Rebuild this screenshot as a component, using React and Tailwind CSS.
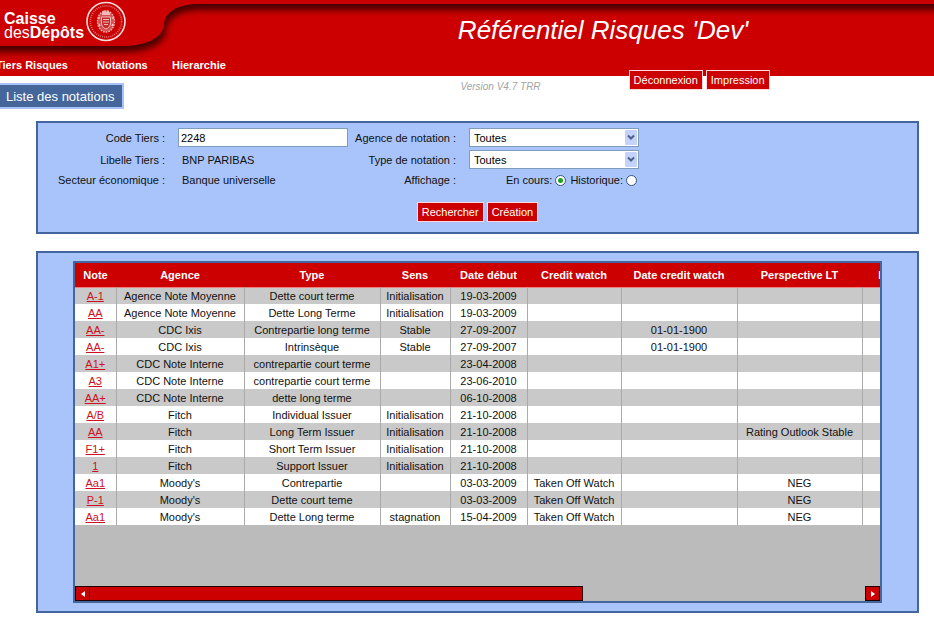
import React from "react";

const NAV = [
  ["Tiers Risques", "w-[77px]"],
  ["Notations", "w-[51px]"],
  ["Hierarchie", "w-[60px]"],
];

const COLUMNS = [
  ["Note", "w-[41px]"],
  ["Agence", "w-[128px]"],
  ["Type", "w-[136px]"],
  ["Sens", "w-[70px]"],
  ["Date début", "w-[77px]"],
  ["Credit watch", "w-[94px]"],
  ["Date credit watch", "w-[116px]"],
  ["Perspective LT", "w-[125px]"],
  ["Date perspective LT", "w-[136px]"],
];

const ROWS = [
  ["A-1", "Agence Note Moyenne", "Dette court terme", "Initialisation", "19-03-2009", "", "", "", ""],
  ["AA", "Agence Note Moyenne", "Dette Long Terme", "Initialisation", "19-03-2009", "", "", "", ""],
  ["AA-", "CDC Ixis", "Contrepartie long terme", "Stable", "27-09-2007", "", "01-01-1900", "", ""],
  ["AA-", "CDC Ixis", "Intrinsèque", "Stable", "27-09-2007", "", "01-01-1900", "", ""],
  ["A1+", "CDC Note Interne", "contrepartie court terme", "", "23-04-2008", "", "", "", ""],
  ["A3", "CDC Note Interne", "contrepartie court terme", "", "23-06-2010", "", "", "", ""],
  ["AA+", "CDC Note Interne", "dette long terme", "", "06-10-2008", "", "", "", ""],
  ["A/B", "Fitch", "Individual Issuer", "Initialisation", "21-10-2008", "", "", "", ""],
  ["AA", "Fitch", "Long Term Issuer", "Initialisation", "21-10-2008", "", "", "Rating Outlook Stable", ""],
  ["F1+", "Fitch", "Short Term Issuer", "Initialisation", "21-10-2008", "", "", "", ""],
  ["1", "Fitch", "Support Issuer", "Initialisation", "21-10-2008", "", "", "", ""],
  ["Aa1", "Moody's", "Contrepartie", "", "03-03-2009", "Taken Off Watch", "", "NEG", ""],
  ["P-1", "Moody's", "Dette court teme", "", "03-03-2009", "Taken Off Watch", "", "NEG", ""],
  ["Aa1", "Moody's", "Dette Long terme", "stagnation", "15-04-2009", "Taken Off Watch", "", "NEG", ""],
];

function Swoosh() {
  return (
    <svg className="absolute inset-0 h-full w-full" aria-hidden="true">
      <defs>
        <filter id="soft" x="-5%" y="-40%" width="110%" height="200%">
          <feGaussianBlur stdDeviation="3" />
        </filter>
      </defs>
      <path
        d="M-20 -20V46H122C145 46 163 38 164 25C165 11 178 4 200 4H4000V-20Z"
        fill="#4a0000"
        filter="url(#soft)"
        transform="translate(2 6)"
      />
      <path d="M-20 -20V46H122C145 46 163 38 164 25C165 11 178 4 200 4H4000V-20Z" fill="#cc0000" />
    </svg>
  );
}

function Seal() {
  return (
    <svg className="h-[42px] w-[42px]" viewBox="0 0 42 42" fill="none" stroke="#f6dede" aria-hidden="true">
      <circle cx="21" cy="21.5" r="19" strokeWidth="1.6" />
      <circle cx="21" cy="21.5" r="15.6" stroke="#de7474" strokeWidth="1.6" strokeDasharray="1 1.1" />
      <ellipse cx="21" cy="21.5" rx="8.5" ry="10.5" fill="#d65252" stroke="#eda9a9" strokeWidth="1.4" strokeDasharray="1.8 0.9" />
      <path d="M17 13l2-3 2 2 2-2 2 3v2h-8z" fill="#f0baba" stroke="none" />
      <path d="M16.5 17h9v6c0 3-2 5-4.5 6-2.5-1-4.5-3-4.5-6z" fill="#c42a2a" stroke="#f0baba" strokeWidth="1" />
      <path d="M18 19.5h6M18 22h6M19 24.5h4" strokeWidth="1" stroke="#f0baba" />
      <path d="M14 17v2M28 17v2M14 24l1 2M28 24l-1 2" strokeWidth="1.4" stroke="#f4caca" />
    </svg>
  );
}

function RedButton({ children }) {
  return (
    <button type="button" className="h-5 border border-[#ffd9d9] bg-[#cc0000] px-1 text-[11px] leading-4 text-white">
      {children}
    </button>
  );
}

function Choice({ id }) {
  return (
    <div className="relative">
      <select
        id={id}
        className="block h-[19px] w-full appearance-none border border-[#7f9db9] bg-white pl-1 text-[11px] leading-4 text-black"
      >
        <option>Toutes</option>
      </select>
      <svg className="pointer-events-none absolute top-0.5 right-0.5 h-[15px] w-3" viewBox="0 0 12 15" aria-hidden="true">
        <rect width="12" height="15" rx="1" fill="#c3d3fb" />
        <path d="M3 5.5l3 3 3-3" fill="none" stroke="#4d6185" strokeWidth="2" />
      </svg>
    </div>
  );
}

function Radio({ label, checked }) {
  return (
    <label className="flex items-center gap-[3px]">
      {label}
      <input
        type="radio"
        name="affichage"
        defaultChecked={checked}
        className="h-[11px] w-[11px] appearance-none rounded-full border border-[#33557c] bg-white checked:bg-[radial-gradient(circle,#21a121_0_2px,#ffffff_3px)]"
      />
    </label>
  );
}

export default function App() {
  return (
    <div className="min-h-screen overflow-x-hidden bg-white font-['Liberation_Sans',Arial,sans-serif] text-[11px] leading-4 text-[#111]">
      <header className="relative h-[76px] bg-[#cc0000] text-white">
        <Swoosh />
        <div className="relative flex h-[55px]">
          <div className="flex w-[272px] shrink-0 justify-between pr-[145px] pl-1">
            <div className="pt-3 text-[16px] leading-[14px]">
              <div className="font-bold">Caisse</div>
              <div>
                des<b>Dépôts</b>
              </div>
            </div>
            <Seal />
          </div>
          <h1 className="grow pt-3 text-center text-[26px] leading-9 whitespace-nowrap italic">Référentiel Risques 'Dev'</h1>
        </div>
        <nav className="relative -ml-1 flex gap-6 pt-0.5 font-bold">
          {NAV.map(([item, width]) => (
            <a key={item} href="#" className={`${width} whitespace-nowrap`}>
              {item}
            </a>
          ))}
        </nav>
      </header>

      <div className="flex h-[45px]">
        <div className="w-[272px] shrink-0 pt-[7px]">
          <h2 className="h-[26px] w-[124px] border-2 border-l-0 border-[#a6c4fa] bg-[#44669a] pl-1.5 text-[13px] leading-[23px] whitespace-nowrap text-white">
            Liste des notations
          </h2>
        </div>
        <div className="flex grow justify-center gap-[88px] pl-6">
          <p className="pt-[3px] text-[10px] whitespace-nowrap text-[#a3a3a3] italic">Version V4.7 TRR</p>
          <div className="relative -mt-[6px] flex h-5 gap-[3px]">
            <RedButton>Déconnexion</RedButton>
            <RedButton>Impression</RedButton>
          </div>
        </div>
      </div>

      <main className="mr-[15px] ml-9 flex flex-col gap-[17px]">
        <form className="border-2 border-[#44669f] bg-[#a8c4fa] pt-[5px] pb-2.5" onSubmit={(e) => e.preventDefault()}>
          <div className="grid grid-cols-[127px_170px_95px_170px] grid-rows-[19px_19px_16px] items-center gap-x-[13px] gap-y-[3px] whitespace-nowrap">
            <label htmlFor="code" className="justify-self-end">Code Tiers :</label>
            <input id="code" defaultValue="2248" className="h-[19px] w-full border border-[#7f9db9] bg-white px-0.5 text-black" />
            <label htmlFor="agence" className="justify-self-end">Agence de notation :</label>
            <Choice id="agence" />
            <span className="justify-self-end">Libelle Tiers :</span>
            <span className="pl-1">BNP PARIBAS</span>
            <label htmlFor="type" className="justify-self-end">Type de notation :</label>
            <Choice id="type" />
            <span className="justify-self-end">Secteur économique :</span>
            <span className="pl-1">Banque universelle</span>
            <span className="justify-self-end">Affichage :</span>
            <div className="flex justify-end gap-1 pr-0.5">
              <Radio label="En cours:" checked />
              <Radio label="Historique:" />
            </div>
          </div>
          <div className="mt-[14px] flex justify-center gap-[3px]">
            <RedButton>Rechercher</RedButton>
            <RedButton>Création</RedButton>
          </div>
        </form>

        <section className="border-2 border-[#44669f] bg-[#a8c4fa] px-[35px] py-2">
          <div className="flex h-[342px] flex-col justify-between overflow-hidden border-2 border-[#44669f] bg-[#bbbbbb]">
            <div className="overflow-hidden">
              <table className="w-[923px] table-fixed border-collapse text-center whitespace-nowrap">
                <thead>
                  <tr className="h-6 border-b border-[#f08080] bg-[#cc0000] text-white">
                    {COLUMNS.map(([name, width]) => (
                      <th key={name} className={`${width} p-0 font-bold`}>
                        {name}
                      </th>
                    ))}
                  </tr>
                </thead>
                <tbody>
                  {ROWS.map((row, r) => (
                    <tr key={r} className="h-[17px] odd:bg-[#c9c9c9] even:bg-white">
                      {row.map((cell, c) => (
                        <td key={c} className="border-r border-[#aaaaaa] p-0">
                          {c === 0 ? (
                            <a href="#" className="text-[#cc1122] underline">
                              {cell}
                            </a>
                          ) : (
                            cell
                          )}
                        </td>
                      ))}
                    </tr>
                  ))}
                </tbody>
              </table>
            </div>
            <div className="flex h-[15px] shrink-0">
              <button type="button" aria-label="Défiler à gauche" className="flex w-[15px] items-center justify-center border border-[#220000] bg-[#cc0000]">
                <svg className="h-1.5 w-1" viewBox="0 0 4 6" fill="white" aria-hidden="true">
                  <path d="M4 0v6L0 3z" />
                </svg>
              </button>
              <div className="grow">
                <div className="h-full w-7/11 border border-l-0 border-[#220000] bg-[#cc0000]" />
              </div>
              <button type="button" aria-label="Défiler à droite" className="flex w-[15px] items-center justify-center border border-[#220000] bg-[#cc0000]">
                <svg className="h-1.5 w-1" viewBox="0 0 4 6" fill="white" aria-hidden="true">
                  <path d="M0 0v6l4-3z" />
                </svg>
              </button>
            </div>
          </div>
        </section>
      </main>
    </div>
  );
}
